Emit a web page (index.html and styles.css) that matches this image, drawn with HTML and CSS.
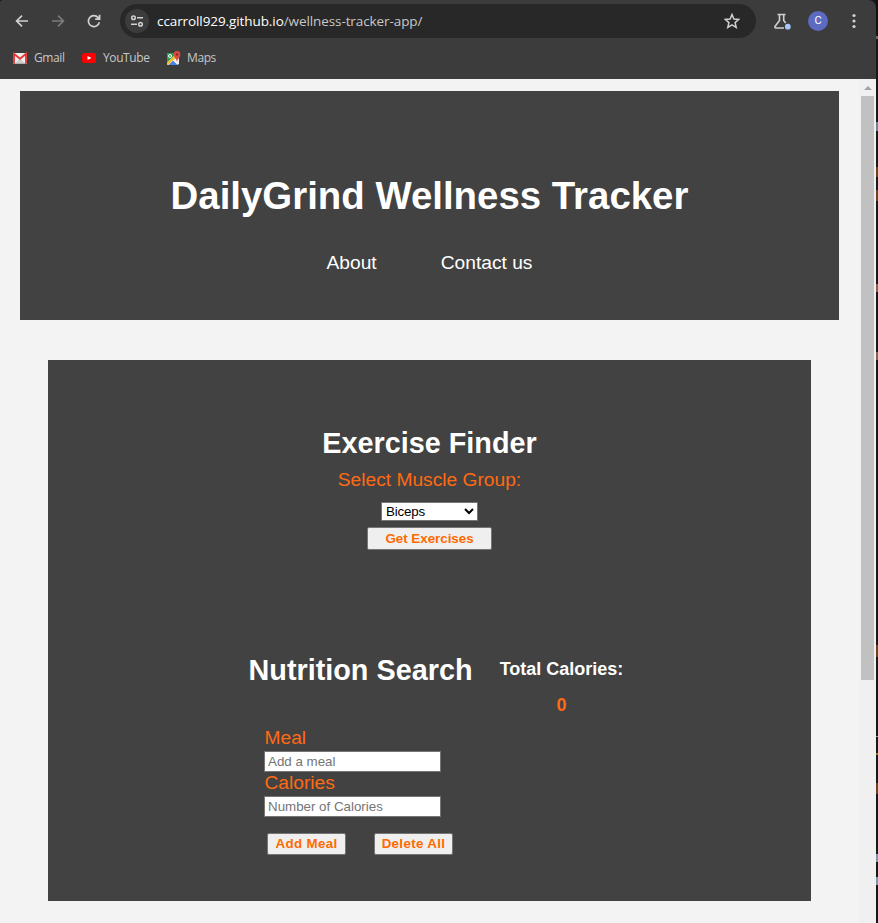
FILE: index.html
```html
<!DOCTYPE html>
<html lang="en">
<head>
<meta charset="utf-8">
<title>DailyGrind Wellness Tracker</title>
<link rel="stylesheet" href="styles.css">
</head>
<body>
<div class="window">
  <div class="browser">
    <div class="toolbar">
      <svg class="nav" viewBox="0 0 16 16"><path d="M14 8H2.8M8 2.6 2.6 8 8 13.4"/></svg>
      <svg class="nav dim" viewBox="0 0 16 16"><path d="M2 8h11.2M8 2.6 13.4 8 8 13.4"/></svg>
      <svg class="nav" viewBox="0 0 16 16"><path d="M13.3 9.2A5.5 5.5 0 1 1 12.2 4.6L13.5 6M13.6 1.8V6.2H9.2"/></svg>
      <div class="address">
        <span class="site"><svg viewBox="0 0 14 14"><circle cx="3.5" cy="3.7" r="1.8"/><path d="M7 3.7h6M1 10.2h6"/><circle cx="10.5" cy="10.2" r="1.8"/></svg></span>
        <span class="url"><b>ccarroll929.github.io</b>/wellness-tracker-app/</span>
        <svg class="star" viewBox="0 0 16 16"><path d="M8 1.500 9.900 6l4.900.4-3.700 3.200 1.100 4.800L8 11.800l-4.200 2.600 1.100-4.800L1.200 6.400 6.100 6z"/></svg>
      </div>
      <svg class="flask" viewBox="0 0 17 17"><path d="M3.500 1.500h8M5.500 1.500v6L1 13.400Q.5 15 1.900 15H10M9.700 1.500v6l2 2.600"/><circle cx="13.800" cy="13.700" r="2.900"/></svg>
      <span class="avatar">C</span>
      <svg class="dots" viewBox="0 0 4 16"><circle cx="2" cy="2.500" r="1.600"/><circle cx="2" cy="8" r="1.600"/><circle cx="2" cy="13.500" r="1.600"/></svg>
    </div>
    <div class="bookmarks">
      <svg class="gmail" viewBox="0 0 14 12"><path fill="#eee" d="M0 1h14v10.500H0z"/><path fill="#ccc" d="m2 11.500 5-5 5 5z"/><path fill="none" stroke="#e53935" stroke-width="1.900" d="M1 11.500V1.800l6 5 6-5v9.700"/></svg>
      <span class="gmail-name">Gmail</span>
      <svg class="youtube" viewBox="0 0 14 10"><rect width="14" height="10" rx="2.200" fill="#f00"/><path fill="#fff" d="m5.500 2.900 4 2.100-4 2.100z"/></svg>
      <span class="youtube-name">YouTube</span>
      <svg class="maps" viewBox="0 0 15 15"><path fill="#2e9f57" d="M1 2h9v6L1 14z"/><path fill="#eee" d="m1 12 9-9 3 3v7l-2 1-4-4-4 4H1z"/><path fill="#4285f4" d="m3 14 4-4 4.500 4z"/><path fill="#f5bd24" d="m1 11.500 7.500-7 1.500 2-8 7.500H1z"/><circle cx="4" cy="5" r="1.500" fill="none" stroke="#fff"/><path fill="#dd4b3e" d="M11 11C11 8 7.700 6.500 7.700 3.400a3.300 3.300 0 0 1 6.600 0C14.300 6.500 11 8 11 11z"/><circle cx="11" cy="3.500" r="1.200" fill="#802d27"/></svg>
      <span class="maps-name">Maps</span>
    </div>
  </div>
  <div class="viewport">
    <div class="page">
      <header>
        <h1>DailyGrind Wellness Tracker</h1>
        <nav><a>About</a><a>Contact us</a></nav>
      </header>
      <main>
        <section class="finder">
          <h2>Exercise Finder</h2>
          <label for="muscle">Select Muscle Group:</label>
          <select id="muscle"><option>Biceps</option></select>
          <button class="get">Get Exercises</button>
        </section>
        <section class="nutrition">
          <div class="search">
            <h2>Nutrition Search</h2>
            <form>
              <label for="meal">Meal</label>
              <input id="meal" placeholder="Add a meal">
              <label for="cal">Calories</label>
              <input id="cal" placeholder="Number of Calories">
              <div class="actions"><button type="button">Add Meal</button><button type="button">Delete All</button></div>
            </form>
          </div>
          <div class="total"><h3>Total Calories:</h3><p>0</p></div>
        </section>
      </main>
    </div>
    <div class="scrollbar"><i class="up"></i><i class="thumb"></i></div>
  </div>
</div>
<div class="edge"></div>
</body>
</html>
```
FILE: styles.css
```css
* { box-sizing: border-box; }
body { margin: 0; display: flex; width: 878px; height: 923px; overflow: hidden; background: #16181b; font-family: "Liberation Sans", Arial, sans-serif; }
h1, h2, h3, p { margin: 0; }
svg { flex: none; display: block; }
.window { width: 876px; }
.browser { height: 79px; background: #3c3c3c; border-radius: 3px 8px 0 0; font-family: "Open Sans", "Noto Sans", sans-serif; color: #c7c7c7; }
.toolbar { height: 42px; display: flex; align-items: center; padding-left: 14px; }
.nav { width: 16px; height: 16px; margin-right: 20px; fill: none; stroke: #d0d0d0; stroke-width: 1.7; }
.dim { stroke: #7b7b7b; }
.address { width: 636px; height: 34px; margin-left: -2px; border-radius: 17px; background: #282828; display: flex; align-items: center; padding: 0 16px 0 5px; }
.site { width: 24px; height: 24px; border-radius: 50%; background: #3c3c3c; display: grid; place-items: center; }
.site svg { width: 14px; height: 14px; fill: none; stroke: #d2d2d2; stroke-width: 1.5; }
.url { margin-left: 8px; font-size: 13.5px; line-height: 20px; white-space: nowrap; letter-spacing: -.09px; }
.url b { font-weight: 400; color: #fff; }
.star { width: 16px; height: 16px; margin-left: auto; fill: none; stroke: #d0d0d0; stroke-width: 1.5; }
.flask { width: 17px; height: 17px; margin-left: 18px; fill: none; stroke: #d0d0d0; stroke-width: 1.6; }
.flask circle { fill: #a8c7fa; stroke: none; }
.avatar { width: 20px; height: 20px; margin-left: 17px; border-radius: 50%; background: #5c6bc0; color: #fff; font: 11px/20px Roboto, sans-serif; text-align: center; }
.dots { width: 4px; height: 16px; margin-left: 24px; fill: #d0d0d0; }
.bookmarks { height: 32px; display: flex; align-items: center; padding-left: 13px; font-size: 12px; letter-spacing: -.4px; }
.gmail { width: 14px; height: 12px; }
.gmail-name { margin-left: 7px; width: 31px; }
.youtube { width: 14px; height: 10px; margin-left: 17px; }
.youtube-name { margin-left: 7px; width: 46px; }
.maps { width: 15px; height: 15px; margin-left: 17px; }
.maps-name { margin-left: 6px; }
.bookmarks span { white-space: nowrap; position: relative; top: -1px; }
.viewport { height: 844px; display: flex; background: #f3f3f3; }
.page { width: 859px; padding: 12px 20px 0; }
header { height: 229px; background: #424242; color: #fff; padding-top: 82px; text-align: center; }
h1 { font-size: 38.4px; line-height: 46px; white-space: nowrap; }
nav { margin-top: 33px; font-size: 19.2px; line-height: 22px; display: flex; justify-content: center; gap: 64px; }
main { margin: 40px 28px 0; height: 541px; background: #424242; color: #fff; padding-top: 66px; }
h2 { font-size: 28.8px; line-height: 34px; white-space: nowrap; }
label { color: #ff6a13; font-size: 19.2px; line-height: 22px; }
.finder { height: 227px; display: flex; flex-direction: column; align-items: center; }
.finder label { margin-top: 9px; }
select { width: 97px; height: 19px; margin-top: 11px; border: 1px solid #767676; border-radius: 0; background: #fff; color: #000; font: 13.333px "Liberation Sans", Arial, sans-serif; padding: 0; letter-spacing: -.15px; }
button { height: 22px; padding: 0; border: 1px solid #767676; border-radius: 2px; background: #efefef; color: #ff6a00; font: bold 13.333px/18px "Liberation Sans", Arial, sans-serif; letter-spacing: .35px; white-space: nowrap; }
.get { width: 125px; height: 23px; margin-top: 6px; letter-spacing: 0; }
.nutrition { display: flex; padding-left: 200.5px; }
.search { width: 224px; }
form { width: 200px; margin: 40px 0 0 15.5px; display: flex; flex-direction: column; }
form label { line-height: 22px; height: 24px; padding-left: .5px; }
input { width: 177px; height: 21px; border: 1px solid #767676; padding: 0 3px; background: #fff; font: 13.333px "Liberation Sans", Arial, sans-serif; }
input::placeholder { color: #757575; }
.actions { display: flex; gap: 28px; margin: 16px 0 0 3px; }
.actions button { width: 79px; flex: none; }
.total { width: 124px; margin-left: 27px; text-align: center; }
h3 { font-size: 18px; line-height: 32px; white-space: nowrap; }
.total p { margin-top: 9px; color: #ff6a13; font-weight: 700; font-size: 18px; line-height: 22px; }
.scrollbar { width: 17px; background: #f0f0f0; display: flex; flex-direction: column; align-items: center; }
.up { width: 0; height: 0; margin: 7px 0 6px; border: 4px solid transparent; border-top: 0; border-bottom-color: #a3a3a3; }
.thumb { width: 13px; height: 584px; background: #c1c1c1; }
.edge { width: 2px; background: linear-gradient(#111 0 36px, #79665a 36px 39px, #16181b 39px 122px, #718095 122px 131px, #16181b 131px 167px, #6c4121 167px 177px, #16181b 177px 190px, #6c4121 190px 201px, #16181b 201px 284px, #83604f 284px 292px, #16181b 292px 352px, #83604f 352px 360px, #16181b 360px 645px, #6c4121 645px 657px, #16181b 657px 736px, #999 736px 737px, #16181b 737px 753px, #917713 753px 755px, #16181b 755px 783px, #6c4121 783px 794px, #16181b 794px 854px, #8093ad 854px 862px, #16181b 862px 877px, #8093ad 877px 885px, #16181b 885px); }
```
